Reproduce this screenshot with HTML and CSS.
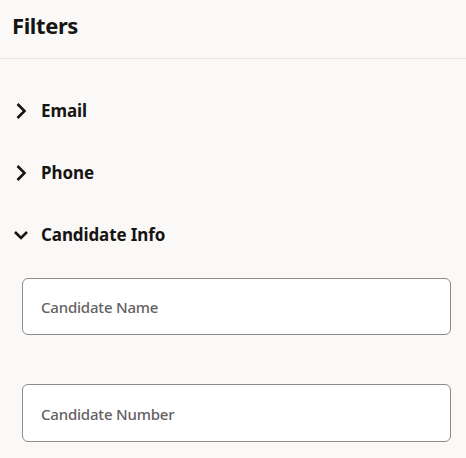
FILE: index.html
```html
<!DOCTYPE html>
<html lang="en">
<head>
<meta charset="utf-8">
<title>Filters</title>
<link rel="stylesheet" href="styles.css">
</head>
<body>
<div class="panel">
  <header class="panel-header">
    <h1 class="title">Filters</h1>
  </header>
  <div class="sections">
    <div class="section-row">
      <svg class="chev" width="18" height="18" viewBox="0 0 18 18"><polyline points="5.5,2 12.5,9 5.5,16" /></svg>
      <span class="section-label">Email</span>
    </div>
    <div class="section-row">
      <svg class="chev" width="18" height="18" viewBox="0 0 18 18"><polyline points="5.5,2 12.5,9 5.5,16" /></svg>
      <span class="section-label">Phone</span>
    </div>
    <div class="section-row">
      <svg class="chev" width="18" height="18" viewBox="0 0 18 18"><polyline points="3,6 9,12 15,6" /></svg>
      <span class="section-label">Candidate Info</span>
    </div>
    <div class="section-body">
      <div class="field"><span class="field-label">Candidate Name</span></div>
      <div class="field field-gap"><span class="field-label">Candidate Number</span></div>
    </div>
  </div>
</div>
</body>
</html>
```
FILE: styles.css
```css
html, body {
  margin: 0;
  padding: 0;
  background: #faf9f7;
}
body {
  font-family: "Noto Sans", "Open Sans", sans-serif;
  color: #161513;
}
.panel {
  width: 466px;
}
.panel-header {
  height: 59px;
  border-bottom: 1px solid #e9e7e4;
  box-sizing: border-box;
  padding: 10px 0 0 12px;
}
.title {
  margin: 0;
  font-size: 22px;
  line-height: 30px;
  font-weight: 700;
  letter-spacing: -0.4px;
}
.sections {
  padding-top: 21px;
}
.section-row {
  height: 62px;
  display: flex;
  align-items: center;
  padding-left: 12px;
  gap: 11px;
}
.chev {
  flex: none;
  fill: none;
  stroke: #161513;
  stroke-width: 2.6;
  stroke-linecap: butt;
  stroke-linejoin: miter;
}
.section-label {
  font-size: 17px;
  line-height: 24px;
  font-weight: 700;
  letter-spacing: -0.1px;
}
.section-body {
  padding: 12px 15px 0 22px;
}
.field {
  height: 57px;
  box-sizing: border-box;
  border: 1px solid #8d8b88;
  border-radius: 6px;
  background: #ffffff;
  display: flex;
  align-items: center;
  padding: 1px 0 0 18px;
}
.field-gap {
  margin-top: 49px;
  height: 58px;
}
.field-label {
  font-size: 15px;
  font-weight: 500;
  color: #63625f;
  letter-spacing: -0.2px;
}
```
